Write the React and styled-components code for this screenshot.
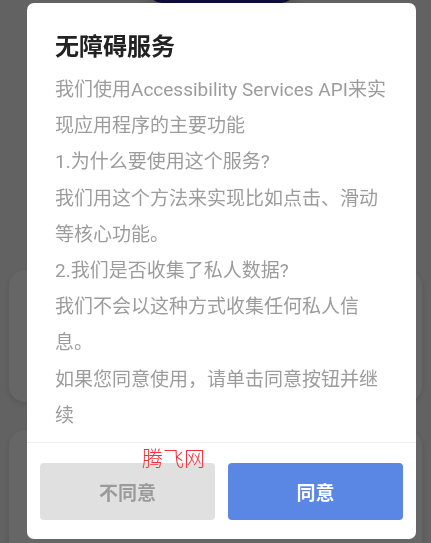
import React from 'react';
import styled, { createGlobalStyle } from 'styled-components';

const GlobalStyle = createGlobalStyle`
  html, body {
    margin: 0;
    padding: 0;
    background: #f5f5f5;
  }
  body {
    font-family: Roboto, "Noto Sans CJK SC", sans-serif;
  }
`;

const Page = styled.div`
  width: 431px;
  height: 543px;
  overflow: hidden;
  display: flex;
  flex-direction: column;
  align-items: stretch;
  background: #f5f5f5;
`;

const TopPill = styled.div`
  flex-shrink: 0;
  align-self: flex-start;
  margin-left: 148px;
  margin-top: -37px;
  width: 147px;
  height: 40px;
  border-radius: 0 0 14px 14px;
  background: #20209a;
  box-shadow: 0 0 12px 4px rgba(0, 0, 0, 0.18);
`;

const Card = styled.div`
  flex-shrink: 0;
  margin: ${p => p.$top}px 9px 0 9px;
  height: ${p => p.$height}px;
  border-radius: 16px;
  background: #ffffff;
  box-shadow: 0 2px 6px rgba(0, 0, 0, 0.12);
`;

const Backdrop = styled.div`
  position: fixed;
  inset: 0;
  background: rgba(0, 0, 0, 0.6);
`;

const Dialog = styled.div`
  position: absolute;
  left: 27px;
  top: 3px;
  width: 389px;
  background: #ffffff;
  border-radius: 7px;
  display: flex;
  flex-direction: column;
  overflow: hidden;
`;

const Content = styled.div`
  padding: 28px 28px 8px 28px;
`;

const Title = styled.h2`
  margin: 0 0 9px 0;
  font-size: 24px;
  line-height: 32px;
  font-weight: 700;
  color: #222222;
`;

const Body = styled.div`
  font-size: 19px;
  line-height: 36.2px;
  color: #9c9c9c;
`;

const Line = styled.p`
  margin: 0;
`;

const Divider = styled.div`
  height: 1px;
  background: #eeeeee;
`;

const Actions = styled.div`
  display: grid;
  grid-template-columns: 1fr 1fr;
  gap: 13px;
  padding: 20px 13px 19px 13px;
`;

const ActionButton = styled.button`
  height: 57px;
  border: none;
  border-radius: 4px;
  font-family: Roboto, "Noto Sans CJK SC", sans-serif;
  font-size: 19px;
  font-weight: 700;
  background: ${p => (p.$primary ? '#5a86e4' : '#e0e0e0')};
  color: ${p => (p.$primary ? '#ffffff' : '#9a9a9a')};
  cursor: pointer;
`;

const Watermark = styled.span`
  position: absolute;
  left: 115px;
  top: 446px;
  font-family: "Liberation Serif", "Noto Sans CJK SC", serif;
  font-size: 21px;
  line-height: 1;
  font-weight: 300;
  color: #f0303c;
  pointer-events: none;
`;

const lines = [
  '我们使用Accessibility Services API来实现应用程序的主要功能',
  '1.为什么要使用这个服务?',
  '我们用这个方法来实现比如点击、滑动等核心功能。',
  '2.我们是否收集了私人数据?',
  '我们不会以这种方式收集任何私人信息。',
  '如果您同意使用，请单击同意按钮并继续',
];

export default function App() {
  return (
    <>
      <GlobalStyle />
      <Page>
        <TopPill />
        <Card $top={267} $height={132} />
        <Card $top={28} $height={140} />
      </Page>
      <Backdrop />
      <Dialog>
        <Content>
          <Title>无障碍服务</Title>
          <Body>
            {lines.map(t => (
              <Line key={t}>{t}</Line>
            ))}
          </Body>
        </Content>
        <Divider />
        <Actions>
          <ActionButton>不同意</ActionButton>
          <ActionButton $primary>同意</ActionButton>
        </Actions>
        <Watermark>腾飞网</Watermark>
      </Dialog>
    </>
  );
}
